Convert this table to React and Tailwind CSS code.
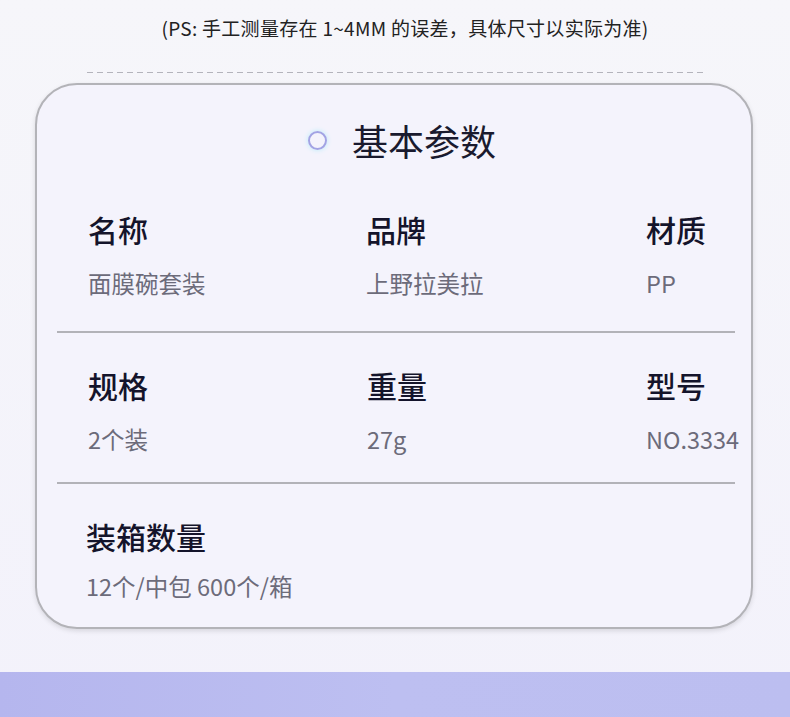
const font = { fontFamily: '"Noto Sans CJK SC", "Noto Sans", sans-serif' };

const rows = [
  [
    ['名称', '面膜碗套装'],
    ['品牌', '上野拉美拉'],
    ['材质', 'PP'],
  ],
  [
    ['规格', '2个装'],
    ['重量', '27g'],
    ['型号', 'NO.3334'],
  ],
];

function Cell({ label, value, gap }) {
  return (
    <div>
      <div className="text-[30px] leading-[36px] font-medium text-[#14142b]">{label}</div>
      <div className={`${gap} text-[23.5px] leading-[30px] text-[#6c6b7a]`}>{value}</div>
    </div>
  );
}

export default function App() {
  return (
    <div
      style={font}
      className="w-[790px] h-[717px] overflow-hidden flex flex-col bg-gradient-to-b from-[#f6f6fa] to-[#f3f2fb]"
    >
      <p className="pt-[17px] pl-[20px] text-center text-[19px] leading-[22px] tracking-[0.3px] text-[#222]">
        (PS: 手工测量存在 1~4MM 的误差，具体尺寸以实际为准)
      </p>

      <div className="mt-[33px] ml-[87px] w-[616px] h-px bg-[repeating-linear-gradient(90deg,#b4b4bc_0_6px,transparent_6px_10px)]" />

      {/* card */}
      <div className="mt-[10px] ml-[35px] w-[718px] h-[546px] rounded-[42px] border-2 border-[#b3b3b8] bg-[#f4f3fc] shadow-[0_2px_5px_rgba(0,0,0,0.12)] flex flex-col">
        <div className="pt-[31px] h-[79px] flex items-center justify-center pl-[16px]">
          <span className="w-[19px] h-[19px] rounded-full border-2 border-[#a2a3e4] shadow-[0_0_5px_#b6ecfa]" />
          <span className="ml-[25px] text-[36px] leading-[48px] text-[#1a1a2e]">基本参数</span>
        </div>

        <div className="mt-[47px] grid grid-cols-[278px_280px_1fr] pl-[51px]">
          {rows[0].map(([l, v]) => (
            <Cell key={l} label={l} value={v} gap="mt-[21px]" />
          ))}
        </div>
        <div className="mt-[33px] ml-[20px] mr-[16px] h-[2px] bg-[#b2b2b8]" />

        <div className="mt-[34px] grid grid-cols-[279px_279px_1fr] pl-[51px]">
          {rows[1].map(([l, v]) => (
            <Cell key={l} label={l} value={v} gap="mt-[21px]" />
          ))}
        </div>
        <div className="mt-[28px] ml-[20px] mr-[16px] h-[2px] bg-[#b2b2b8]" />

        <div className="mt-[34px] pl-[49px]">
          <div className="text-[30px] leading-[36px] font-medium text-[#14142b]">装箱数量</div>
          <div className="mt-[17px] text-[23.5px] leading-[30px] text-[#6c6b7a]">12个/中包 600个/箱</div>
        </div>
      </div>

      <div className="mt-auto h-[45px] bg-gradient-to-r from-[#b5b6ee] via-[#bdbff1] to-[#bcbef0]" />
    </div>
  );
}
